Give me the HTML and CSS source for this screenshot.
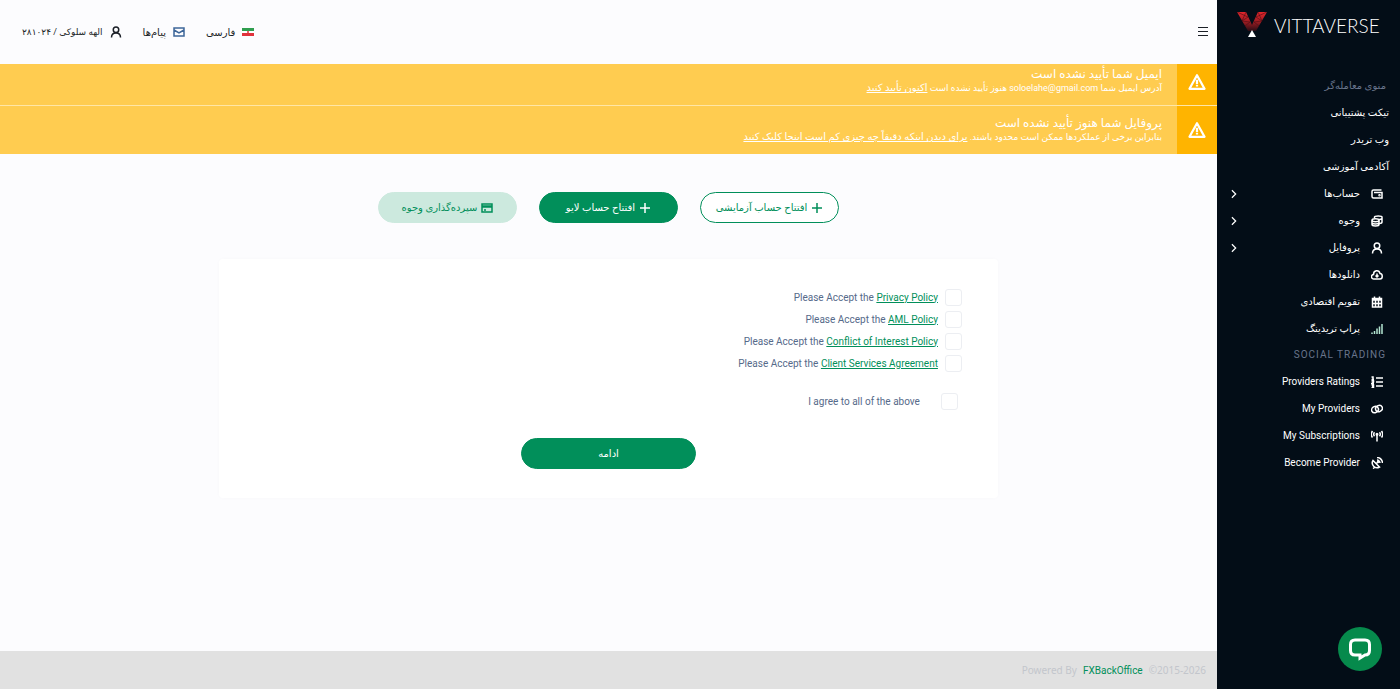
FILE: index.html
```
<!DOCTYPE html>
<html lang="fa" dir="rtl">
<head>
  <meta charset="UTF-8" />
  <meta name="viewport" content="width=device-width, initial-scale=1" />
  <title>Vittaverse</title>
  <link rel="stylesheet" href="styles.css">
</head>
<body>
  <aside class="sidebar">
    <a href="#" class="logo" dir="ltr">
      <svg class="logo-mark" viewBox="0 0 30 26">
        <defs>
          <linearGradient id="red" gradientUnits="userSpaceOnUse" x1="0" y1="0" x2="0" y2="20">
            <stop offset="0" stop-color="#e3262c" />
            <stop offset="0.5" stop-color="#9a1c22" />
            <stop offset="1" stop-color="#1c0b13" />
          </linearGradient>
        </defs>
        <path d="M0 0h9l6 13 6-13h9l-11 19h-8z" fill="url(#red)" />
        <path d="M0 0l11 5-6 4M9 0L5 9l8 1-5 4M30 0L19 5l6 4M21 0l4 9-8 1 5 4" fill="none" stroke="#4d0d14" stroke-width="0.6" />
        <path d="M15 18l4 7h-8z" fill="#fff" />
      </svg>
      <span>VITTAVERSE</span>
    </a>

    <nav class="menu">
      <h2>منوی معامله‌گر</h2>
      <a href="#" class="plain">تیکت پشتیبانی</a>
      <a href="#" class="plain">وب تریدر</a>
      <a href="#" class="plain">آکادمی آموزشی</a>
      <a href="#">
        <svg class="icon" viewBox="0 0 24 24"><path d="M21 4H5a3 3 0 0 0-3 3v10a3 3 0 0 0 3 3h17V9H6" /><circle cx="17" cy="14.500" r="1" /></svg>
        <span>حساب‌ها</span>
        <svg class="arrow" viewBox="0 0 24 24"><path d="M7 3l9 9-9 9" /></svg>
      </a>
      <a href="#">
        <svg class="icon" viewBox="0 0 24 24"><path d="M2 11v8c0 4 14 4 14 0v-8M2 15c0 4 14 4 14 0M7 7V4c0-3 15-3 15 0v10c0 2-2 3-5 3M16 9c3 0 6-1 6-3" /><ellipse cx="9" cy="10.500" rx="7" ry="3" /></svg>
        <span>وجوه</span>
        <svg class="arrow" viewBox="0 0 24 24"><path d="M7 3l9 9-9 9" /></svg>
      </a>
      <a href="#">
        <svg class="icon" viewBox="0 0 24 24"><circle cx="12" cy="7.500" r="5.500" /><path d="M3 23c0-6 3-9 9-9s9 3 9 9" /></svg>
        <span>پروفایل</span>
        <svg class="arrow" viewBox="0 0 24 24"><path d="M7 3l9 9-9 9" /></svg>
      </a>
      <a href="#">
        <svg class="icon" viewBox="0 0 24 24"><path d="M6 20a4.500 4.500 0 0 1-1-9C5 2 16 1 18 9c6 0 6 11 0 11zM12 9v7M9 13l3 3 3-3" /></svg>
        <span>دانلودها</span>
      </a>
      <a href="#">
        <svg class="icon" viewBox="0 0 24 24"><path d="M3 5h18v17H3zM3 8h18M3 15h18M9 9v13M15 9v13M7 1v5M17 1v5" /></svg>
        <span>تقویم اقتصادی</span>
      </a>
      <a href="#">
        <svg class="icon bars" viewBox="0 0 24 24"><path d="M2 19v3M7 16v6M12 11v11M17 7v15M22 2v20" /></svg>
        <span>پراپ تریدینگ</span>
      </a>
      <h2 class="latin">SOCIAL TRADING</h2>
      <a href="#">
        <svg class="icon" viewBox="0 0 24 24"><path d="M10 4h14M10 12h14M10 20h14M1 2h3v5M1 7h5M1 10h4v2l-4 3h5M1 18h4v5H1M2 20.500h3" /></svg>
        <span>Providers Ratings</span>
      </a>
      <a href="#">
        <svg class="icon" viewBox="0 0 24 24"><ellipse cx="8" cy="13" rx="7" ry="6" transform="rotate(-30 8 13)" /><ellipse cx="16" cy="11" rx="7" ry="6" transform="rotate(-30 16 11)" /></svg>
        <span>My Providers</span>
      </a>
      <a href="#">
        <svg class="icon" viewBox="0 0 24 24"><path d="M12 9v14M3 2c-3 4-3 9 0 13M21 2c3 4 3 9 0 13M7 4.500c-2 2.500-2 5.500 0 8M17 4.500c2 2.500 2 5.500 0 8" /><circle cx="12" cy="8.500" r="1.500" /></svg>
        <span>My Subscriptions</span>
      </a>
      <a href="#">
        <svg class="icon" viewBox="0 0 24 24"><path d="M4 7c-5 8 4 18 13 13zM10 14l4-4M12 1c6 0 11 5 11 11M12 6c3 0 6 3 6 6M7 21l-3 2" /><circle cx="14" cy="10" r="1" /></svg>
        <span>Become Provider</span>
      </a>
    </nav>
  </aside>

  <div class="page">
    <header>
      <button type="button" class="toggle" aria-label="منو">
        <svg viewBox="0 0 12 12"><path d="M1 1.500h10M1 5.500h10M1 9.500h10" /></svg>
      </button>
      <div class="user-links">
        <a href="#">
          <svg class="flag" viewBox="0 0 12 8"><path d="M0 0h12v3H0z" fill="#2f9e4f" /><path d="M0 3h12v2H0z" fill="#fff" /><path d="M0 5h12v3H0z" fill="#e0323c" /><circle cx="6" cy="4" r="1" fill="#e0323c" /></svg>
          <span>فارسی</span>
        </a>
        <a href="#">
          <svg class="icon mail" viewBox="0 0 24 24"><path d="M2 4h20v16H2zM2 8l10 6 10-6" /></svg>
          <span>پیام‌ها</span>
        </a>
        <a href="#" class="user">
          <svg class="icon" viewBox="0 0 24 24"><circle cx="12" cy="7.500" r="5.500" /><path d="M3 23c0-6 3-9 9-9s9 3 9 9" /></svg>
          <span>الهه سلوکی / ۲۸۱۰۲۴</span>
        </a>
      </div>
    </header>

    <div class="alert alert-email">
      <div class="alert-icon">
        <svg viewBox="0 0 24 24"><path d="M12 3l10 18H2zM12 9v6M12 16v2" /></svg>
      </div>
      <div class="alert-text">
        <strong>ایمیل شما تأیید نشده است</strong>
        <p>آدرس ایمیل شما soloelahe@gmail.com هنوز تأیید نشده است <a href="#">اکنون تأیید کنید</a></p>
      </div>
    </div>
    <div class="alert alert-profile">
      <div class="alert-icon">
        <svg viewBox="0 0 24 24"><path d="M12 3l10 18H2zM12 9v6M12 16v2" /></svg>
      </div>
      <div class="alert-text">
        <strong>پروفایل شما هنوز تأیید نشده است</strong>
        <p>بنابراین برخی از عملکردها ممکن است محدود باشند. <a href="#">برای دیدن اینکه دقیقاً چه چیزی کم است اینجا کلیک کنید</a></p>
      </div>
    </div>

    <main>
      <div class="actions">
        <button type="button" class="button outline">
          <svg viewBox="0 0 12 12"><path d="M6 1v10M1 6h10" /></svg>
          افتتاح حساب آزمایشی
        </button>
        <button type="button" class="button">
          <svg viewBox="0 0 12 12"><path d="M6 1v10M1 6h10" /></svg>
          افتتاح حساب لایو
        </button>
        <button type="button" class="button soft">
          <svg viewBox="0 0 12 12"><path d="M1 2h10v8H1zM1 4h10M1 5h10M3 8h2" /></svg>
          سپرده‌گذاری وجوه
        </button>
      </div>

      <form class="card">
        <div class="check">
          <input type="checkbox" id="privacy" />
          <label for="privacy">Please Accept the <a href="#">Privacy Policy</a></label>
        </div>
        <div class="check">
          <input type="checkbox" id="aml" />
          <label for="aml">Please Accept the <a href="#">AML Policy</a></label>
        </div>
        <div class="check">
          <input type="checkbox" id="conflict" />
          <label for="conflict">Please Accept the <a href="#">Conflict of Interest Policy</a></label>
        </div>
        <div class="check">
          <input type="checkbox" id="client" />
          <label for="client">Please Accept the <a href="#">Client Services Agreement</a></label>
        </div>
        <div class="check check-all">
          <input type="checkbox" id="all" />
          <label for="all">I agree to all of the above</label>
        </div>
        <button type="submit" class="button submit">ادامه</button>
      </form>
    </main>

    <footer dir="ltr">
      <span>Powered By</span>
      <a href="#">FXBackOffice</a>
      <span>©2015-2026</span>
    </footer>
  </div>

  <button type="button" class="chat" aria-label="Chat">
    <svg viewBox="0 0 24 24"><path d="M7 3h10c2.500 0 4.500 1.500 4.500 4.500v6c0 3-2 4.500-4.500 4.500l-5 3v-3H7c-2.500 0-4.500-1.500-4.500-4.500v-6C2.500 4.500 4.500 3 7 3z" /></svg>
  </button>
</body>
</html>
```

FILE: styles.css
```
* {
  box-sizing: border-box;
}

body {
  margin: 0;
  min-height: 100vh;
  display: flex;
  font-family: Roboto, "DejaVu Sans", sans-serif;
  font-size: 10px;
  color: #1b1f27;
  background: #fcfcfe;
}

a {
  color: inherit;
  text-decoration: none;
}

button {
  font-family: inherit;
  cursor: pointer;
}

svg {
  flex: none;
  fill: none;
  stroke: currentColor;
}

.icon {
  width: 12px;
  height: 12px;
  stroke-width: 3;
}

/* sidebar */
.sidebar {
  width: 183px;
  flex: none;
  background: #030d17;
  color: #fff;
}

.logo {
  display: flex;
  align-items: center;
  gap: 7px;
  height: 50px;
  padding: 0 20px;
  font-family: Lato, sans-serif;
  font-size: 19px;
  font-weight: 300;
}

.logo-mark {
  width: 30px;
  height: 26px;
  stroke: none;
}

.menu {
  padding-top: 22px;
}

.menu h2 {
  margin: 0;
  padding: 0 14px;
  font-size: 10px;
  font-weight: 400;
  line-height: 27px;
  color: #69758c;
}

.menu h2.latin {
  line-height: 26px;
  letter-spacing: 1px;
}

.menu a {
  display: flex;
  align-items: center;
  gap: 11px;
  height: 27px;
  padding: 0 17px 0 12px;
}

.menu a.plain {
  padding: 0 11px;
}

.bars {
  color: #b4e6d2;
}

.arrow {
  width: 10px;
  height: 10px;
  margin-right: auto;
  stroke-width: 3;
}

/* page */
.page {
  flex: 1;
  min-width: 0;
  display: flex;
  flex-direction: column;
}

header {
  display: flex;
  align-items: center;
  justify-content: space-between;
  height: 64px;
  padding: 0 8px 0 22px;
}

.toggle {
  width: 12px;
  height: 12px;
  padding: 0;
  border: none;
  background: none;
  color: #1b1f27;
}

.toggle svg {
  display: block;
}

.user-links {
  display: flex;
  gap: 21px;
}

.user-links a {
  display: flex;
  align-items: center;
  gap: 7px;
}

.user-links .user {
  font-size: 9px;
}

.user-links .mail {
  color: #3d6699;
}

.flag {
  width: 12px;
  height: 8px;
  stroke: none;
}

.alert {
  display: flex;
  background: #ffcc50;
  color: #fff;
}

.alert-email {
  height: 42px;
  border-bottom: 1px solid #ffe6a6;
}

.alert-profile {
  height: 48px;
}

.alert-icon {
  width: 40px;
  display: flex;
  align-items: center;
  justify-content: center;
  background: #ffb400;
}

.alert-icon svg {
  width: 18px;
  height: 18px;
  stroke-width: 3;
  stroke-linejoin: round;
}

.alert-email .alert-icon {
  padding-bottom: 6px;
}

.alert-text {
  padding: 3px 15px 0;
}

.alert-profile .alert-text {
  padding-top: 10px;
}

.alert strong {
  display: block;
  font-size: 12px;
  font-weight: 400;
  line-height: 14px;
}

.alert p {
  margin: 0;
  font-size: 9px;
  line-height: 14px;
}

.alert p a {
  font-size: 10px;
  text-decoration: underline;
}

main {
  flex: 1;
  padding-top: 38px;
}

.actions {
  display: flex;
  justify-content: center;
  gap: 22px;
  margin-bottom: 36px;
}

.button {
  display: flex;
  align-items: center;
  justify-content: center;
  gap: 4px;
  width: 139px;
  height: 31px;
  padding: 0;
  border: 1px solid #018f5a;
  border-radius: 16px;
  background: #018f5a;
  color: #fff;
  font-size: 10px;
}

.button svg {
  width: 12px;
  height: 12px;
  stroke-width: 1.5;
}

.button.outline {
  background: #fff;
  color: #018f5a;
}

.button.soft {
  border-color: #cce9de;
  background: #cce9de;
  color: #018f5a;
}

.card {
  width: 64%;
  margin: 0 auto;
  padding: 27px 36px 29px;
  background: #fff;
  border-radius: 4px;
  box-shadow: 0 0 4px rgba(40, 50, 90, 0.02);
}

.check {
  display: flex;
  align-items: center;
  gap: 7px;
  height: 22px;
  color: #566a8a;
}

.check input {
  appearance: none;
  width: 17px;
  height: 17px;
  margin: 0;
  border: 1px solid #eceef2;
  border-radius: 3px;
  background: #fff;
}

.check a {
  color: #018f5a;
  text-decoration: underline;
}

.check-all {
  gap: 21px;
  margin-top: 16px;
  padding-right: 4px;
}

.submit {
  width: 175px;
  margin: 26px auto 0;
}

footer {
  display: flex;
  align-items: center;
  justify-content: flex-end;
  gap: 6px;
  height: 38px;
  padding: 0 11px;
  font-family: "Noto Sans", sans-serif;
  color: #c3c6cc;
  background: #e1e1e1;
}

footer a {
  font-family: Roboto, sans-serif;
  color: #018f5a;
}

.chat {
  position: fixed;
  right: 18px;
  bottom: 18px;
  display: flex;
  align-items: center;
  justify-content: center;
  width: 44px;
  height: 44px;
  padding: 0;
  border: none;
  border-radius: 50%;
  background: #068a4c;
  color: #fff;
}

.chat svg {
  width: 24px;
  height: 24px;
  stroke-width: 3;
}
```
